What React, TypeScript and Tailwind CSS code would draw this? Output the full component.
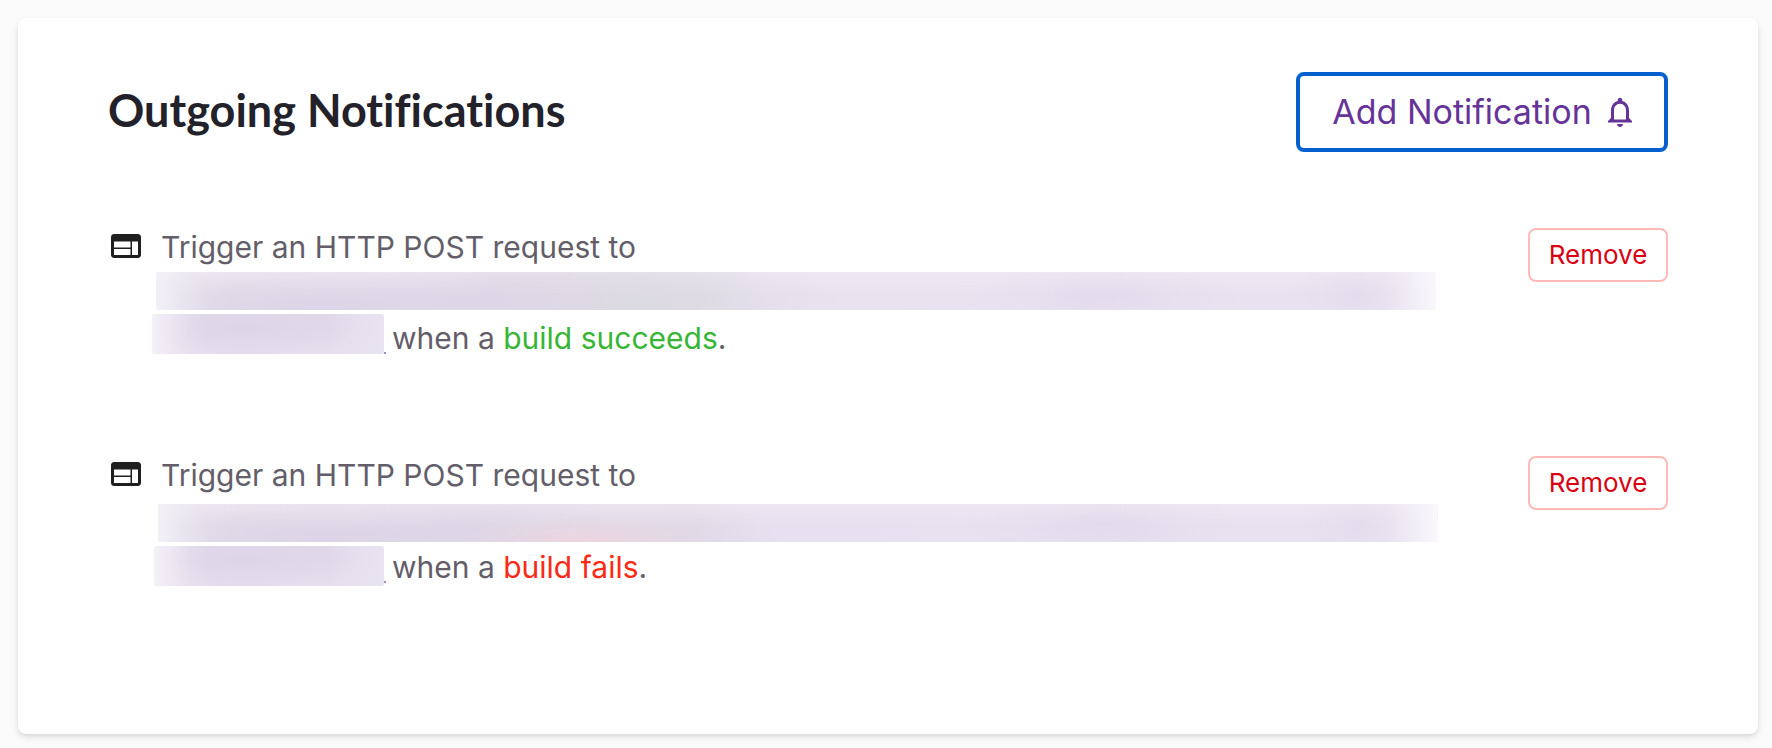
import { MdNotificationsNone, MdWeb } from "react-icons/md";

type Hook = {
  id: string;
  event: string;
  eventClass: string;
  urlClass: string;
  tailRowClass: string;
  tailClass: string;
};

const hooks: Hook[] = [
  {
    id: "success",
    event: "build succeeds",
    eventClass: "text-[#37b635]",
    urlClass:
      "-ml-[5px] mt-0.5 mr-[92px] bg-[linear-gradient(90deg,#f2f0f7_0%,#f0edf599_2%,#f0edf522_4%,#f0edf500_6%),linear-gradient(270deg,#f9f8fc_0%,#f6f3f999_2%,#f3f0f722_4%,#f3f0f700_6%),radial-gradient(170px_40px_at_13%_100%,#d9cde777_0%,#d9cde733_50%,#d9cde700_100%),radial-gradient(140px_40px_at_26%_70%,#ddd3e7aa_0%,#ddd3e744_50%,#ddd3e700_100%),radial-gradient(220px_60px_at_37%_90%,#dcdae2_0%,#dcdae277_50%,#dcdae200_100%),radial-gradient(140px_36px_at_74%_65%,#e2d8eacc_0%,#e2d8ea44_50%,#e2d8ea00_100%),radial-gradient(70px_34px_at_94%_60%,#e3d9ebaa_0%,#e3d9eb44_50%,#e3d9eb00_100%),linear-gradient(180deg,#f0ebf5aa_0%,#f0ebf500_60%),linear-gradient(90deg,#dfdae7_0%,#e1dce8_42%,#e9e3f0_47%,#e8e2f0_100%)]",
    tailRowClass: "mt-1",
    tailClass: "-ml-[9px] w-[232px]",
  },
  {
    id: "failure",
    event: "build fails",
    eventClass: "text-[#fb2a16]",
    urlClass:
      "-ml-[3px] mt-1.5 mr-[90px] bg-[linear-gradient(90deg,#f2f0f7_0%,#f0edf599_2%,#f0edf522_4%,#f0edf500_6%),linear-gradient(270deg,#f9f8fc_0%,#f6f3f999_2%,#f3f0f722_4%,#f3f0f700_6%),radial-gradient(120px_26px_at_33%_100%,#edd5df_0%,#edd5df66_50%,#edd5df00_100%),radial-gradient(170px_40px_at_13%_100%,#d9cde777_0%,#d9cde733_50%,#d9cde700_100%),radial-gradient(140px_40px_at_25%_65%,#dcd4e6aa_0%,#dcd4e644_50%,#dcd4e600_100%),radial-gradient(140px_36px_at_74%_55%,#e2d8eacc_0%,#e2d8ea44_50%,#e2d8ea00_100%),radial-gradient(70px_34px_at_94%_55%,#e3d9ebaa_0%,#e3d9eb44_50%,#e3d9eb00_100%),linear-gradient(180deg,#f0ebf5aa_0%,#f0ebf500_60%),linear-gradient(90deg,#dfdae7_0%,#e1d9e6_42%,#e6e0f0_48%,#e8e2f0_100%)]",
    tailRowClass: "mt-px",
    tailClass: "-ml-[7px] mt-[3px] w-[230px]",
  },
];

function HookRow({ hook }: { hook: Hook }) {
  return (
    <li className="flex items-start">
      <MdWeb className="mt-1 size-9 shrink-0 text-[#1f1f1f]" aria-hidden="true" />
      <div className="ml-[17px] min-w-0 flex-1 text-[30px] leading-[46px] text-[#635e69]">
        <p>Trigger an HTTP POST request to</p>
        <div className={`h-[38px] rounded-xs ${hook.urlClass}`} />
        <div className={`flex items-start ${hook.tailRowClass}`}>
          <div
            className={`h-10 shrink-0 rounded-xs bg-[linear-gradient(90deg,#f4f1f8_0%,#f2eef799_9%,#f0edf533_16%,#f0edf500_24%),linear-gradient(270deg,#e9e4f1_0%,#e9e4f100_25%),radial-gradient(120px_40px_at_40%_40%,#dcd2e799_0%,#dcd2e744_50%,#dcd2e700_100%),linear-gradient(0deg,#e6e0ee_0%,#e1d9ea_60%)] ${hook.tailClass}`}
          />
          <span className="mt-[38px] size-0.5 shrink-0 bg-[#a58bc4]" />
          <p className="ml-1.5 pt-px">
            when a <span className={hook.eventClass}>{hook.event}</span>.
          </p>
        </div>
      </div>
      <button
        type="button"
        className="mt-1 h-[54px] w-[140px] shrink-0 rounded-lg border-2 border-[#ffbab8] bg-white text-[26px] leading-8 text-[#da0013]"
      >
        Remove
      </button>
    </li>
  );
}

export default function App() {
  return (
    <main className="min-h-screen bg-[#fbfbfb] pt-[18px] pr-3.5 pb-3.5 pl-[18px] font-['Inter','Liberation_Sans',sans-serif]">
      <section className="rounded-lg bg-white px-[90px] pt-[54px] pb-36 shadow-[0_2px_4px_rgba(0,0,0,0.08),0_4px_8px_rgba(0,0,0,0.07)]">
        <header className="flex items-center justify-between">
          <h1 className="pb-1 font-['Lato','Liberation_Sans',sans-serif] text-[45px] leading-[56px] font-bold text-[#232129] [font-variant-ligatures:none]">
            Outgoing Notifications
          </h1>
          <button
            type="button"
            className="flex h-20 w-[372px] items-center justify-center gap-2.5 rounded-lg border-4 border-[#0360cc] bg-white pl-1.5 text-[34px] leading-[44px] text-[#663399]"
          >
            Add Notification
            <MdNotificationsNone className="size-9 shrink-0" aria-hidden="true" />
          </button>
        </header>
        <ul className="mt-[72px] flex flex-col gap-[91px]">
          {hooks.map((hook) => (
            <HookRow key={hook.id} hook={hook} />
          ))}
        </ul>
      </section>
    </main>
  );
}
